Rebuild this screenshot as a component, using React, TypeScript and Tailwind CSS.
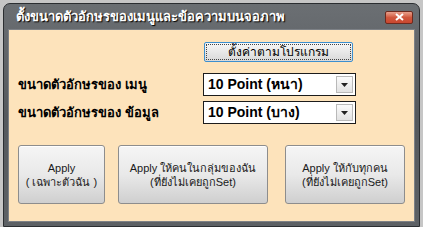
import React from 'react';

const font = { fontFamily: '"Liberation Sans", "DejaVu Sans", "Noto Sans", sans-serif' };

const SelectBox = ({ value }: { value: string }) => (
  <div className="flex h-[23px] w-[153px] items-center border border-[#1c1c1c] bg-white pl-[4px] pr-[2px]">
    <span className="flex-1 text-[14px] font-bold text-black">{value}</span>
    <div className="flex h-[17px] w-[17px] items-center justify-center border border-[#b9b9b9] bg-gradient-to-b from-[#fbfbfb] to-[#e2e2e2]">
      <svg width="7" height="4" viewBox="0 0 7 4">
        <path d="M0 0h7L3.5 4z" fill="#222" />
      </svg>
    </div>
  </div>
);

const BigButton = ({ w, top, bottom }: { w: string; top: string; bottom: string }) => (
  <button
    className={`${w} flex h-[59px] flex-col items-center justify-center whitespace-nowrap rounded-[3px] border border-[#8d8d8d] bg-gradient-to-b from-[#f5f5f5] via-[#e9e9e9] to-[#cfcfcf] text-[11px] leading-[14px] text-[#1a1a1a] shadow-[inset_0_1px_0_#fff]`}
  >
    <span>{top}</span>
    <span>{bottom}</span>
  </button>
);

export default function App() {
  return (
    <div className="h-[227px] w-[423px] bg-[#c6c6c6] pl-[3px] pr-[3px] pt-[3px]" style={font}>
      <div className="flex h-full flex-col rounded-t-[7px] border border-[#2b2e31] bg-gradient-to-b from-[#6b6f73] via-[#55595d] to-[#5d6165]">
        {/* Title bar */}
        <div className="flex h-[25px] items-center justify-between pl-[12px] pr-[6px] pt-[1px]">
          <span className="text-[13px] font-bold text-white [text-shadow:1px_1px_1px_#000]">
            ตั้งขนาดตัวอักษรของเมนูและข้อความบนจอภาพ
          </span>
          <div className="flex h-[13px] w-[28px] items-center justify-center rounded-[2px] border border-[#6d2a1e] bg-gradient-to-b from-[#e8a08c] via-[#d0573d] to-[#c9472f]">
            <svg width="9" height="8" viewBox="0 0 9 8">
              <path d="M1 1l7 6M8 1L1 7" stroke="#fff" strokeWidth="2" />
            </svg>
          </div>
        </div>

        {/* Body */}
        <div className="mx-[4px] mb-[4px] flex-1 border border-[#7d8186] bg-[#fde3bb] px-[9px] pt-[12px]">
          <div className="flex justify-end pr-[52px]">
            <button className="flex h-[20px] w-[149px] items-center justify-center rounded-[2px] border border-[#3c8fcf] bg-gradient-to-b from-[#f7f7f7] to-[#d9d9d9] p-[1px]">
              <span className="flex h-full w-full items-center justify-center border border-dotted border-[#444] text-[12px] text-black">
                ตั้งค่าตามโปรแกรม
              </span>
            </button>
          </div>

          <div className="mt-[11px] flex flex-col gap-[5px]">
            <div className="flex items-center">
              <span className="w-[185px] text-[13px] font-bold text-black">ขนาดตัวอักษรของ เมนู</span>
              <SelectBox value="10 Point (หนา)" />
            </div>
            <div className="flex items-center">
              <span className="w-[185px] text-[13px] font-bold text-black">ขนาดตัวอักษรของ ข้อมูล</span>
              <SelectBox value="10 Point (บาง)" />
            </div>
          </div>

          <div className="mt-[21px] flex items-center">
            <BigButton w="w-[91px]" top="Apply" bottom="( เฉพาะตัวฉัน )" />
            <div className="ml-[13px]">
              <BigButton w="w-[150px]" top="Apply ให้คนในกลุ่มของฉัน" bottom="(ที่ยังไม่เคยถูกSet)" />
            </div>
            <div className="ml-[17px]">
              <BigButton w="w-[120px]" top="Apply ให้กับทุกคน" bottom="(ที่ยังไม่เคยถูกSet)" />
            </div>
          </div>
        </div>
      </div>
    </div>
  );
}
